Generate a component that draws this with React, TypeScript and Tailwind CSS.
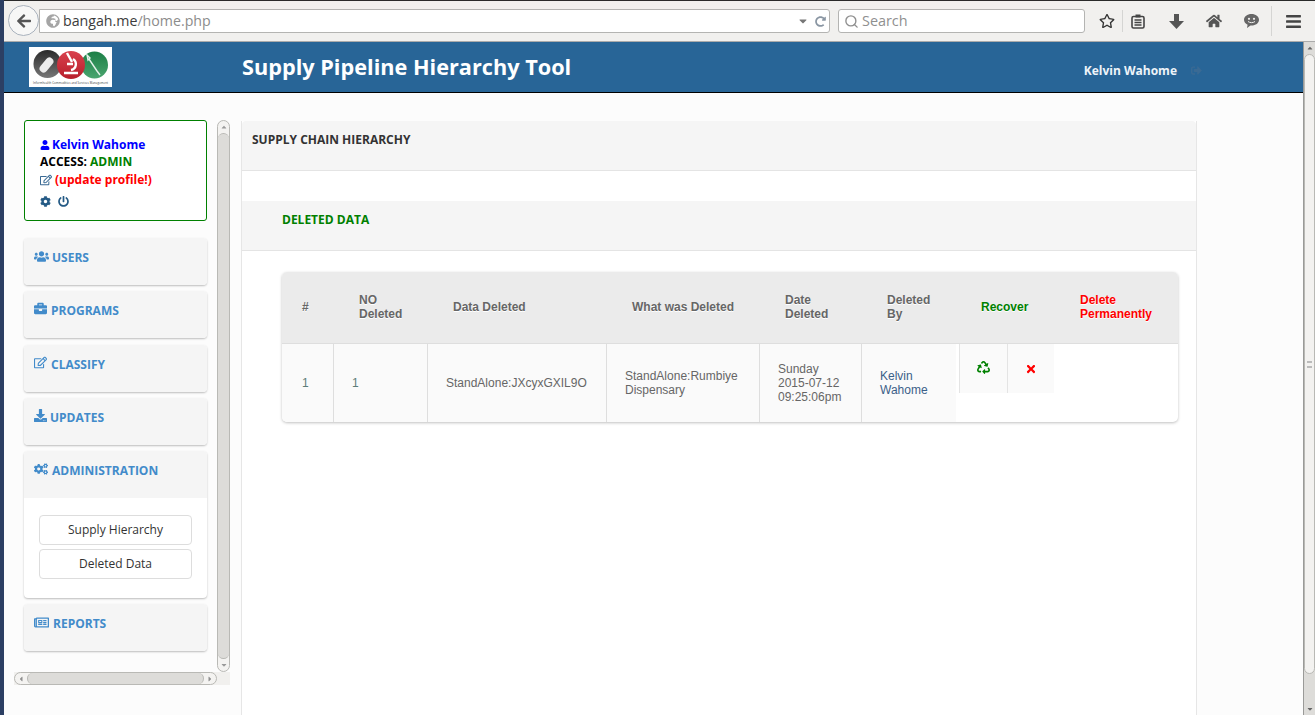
import type { ReactNode } from "react";
import { Search } from "lucide-react";
import {
  FaBriefcase,
  FaCog,
  FaCogs,
  FaDownload,
  FaHome,
  FaPowerOff,
  FaRecycle,
  FaRegEdit,
  FaRegNewspaper,
  FaSignOutAlt,
  FaTimes,
  FaUser,
  FaUsers,
  FaArrowLeft,
  FaGlobeAfrica,
  FaRedoAlt,
  FaRegStar,
  FaBars,
  FaCaretDown,
  FaCaretLeft,
  FaCaretRight,
  FaCaretUp,
} from "react-icons/fa";

function Logo() {
  return (
    <div className="h-[40px] w-[83px] bg-white">
      <svg width="83" height="40" viewBox="0 0 83 40">
        <defs>
          <linearGradient id="grey" x1="0" y1="0" x2="0" y2="1">
            <stop offset="0" stopColor="#2a2a2a" />
            <stop offset="1" stopColor="#777" />
          </linearGradient>
          <linearGradient id="red" x1="0" y1="0" x2="0" y2="1">
            <stop offset="0" stopColor="#d9414d" />
            <stop offset="1" stopColor="#b81f2c" />
          </linearGradient>
          <linearGradient id="green" x1="0" y1="0" x2="0" y2="1">
            <stop offset="0" stopColor="#1c7f46" />
            <stop offset="1" stopColor="#4aa56f" />
          </linearGradient>
        </defs>
        <circle cx="18.5" cy="17" r="14" fill="url(#grey)" />
        <circle cx="65.5" cy="18" r="13.5" fill="url(#green)" />
        <circle cx="42" cy="18" r="14" fill="url(#red)" />
        <rect x="9" y="14" width="17" height="8" rx="4" fill="#ececec" transform="rotate(-50 17.5 18)" />
        <path d="M38 6l5 9M44 12a6 6 0 0 1-2 11M35 26h14M38 17h6" stroke="#fff" strokeWidth="2.4" fill="none" />
        <path d="M58 8l3 3-2 2zM60 12l8 12 3 4" stroke="#e3f1e9" strokeWidth="1.4" fill="none" />
        <text x="4" y="36.5" textLength="75" fontSize="2.8" fill="#333">
          Informhealth Commodities and Services Management
        </text>
      </svg>
    </div>
  );
}

function ClipboardIcon() {
  return (
    <svg width="14" height="15" viewBox="0 0 14 15" fill="none">
      <rect x="1" y="2.5" width="12" height="11.5" rx="1.5" stroke="#444" strokeWidth="1.6" />
      <rect x="4.5" y="0.5" width="5" height="3" fill="#444" />
      <path d="M3.5 6h7M3.5 8.5h7M3.5 11h7" stroke="#444" strokeWidth="1.3" />
    </svg>
  );
}

function DownArrowIcon() {
  return (
    <svg width="15" height="15" viewBox="0 0 15 15">
      <path d="M5 0h5v7h5l-7.500 8L0 7h5z" fill="#555" />
    </svg>
  );
}

function ChatIcon() {
  return (
    <svg width="15" height="14" viewBox="0 0 15 14">
      <path d="M7.500 0C11.700 0 15 2.500 15 5.800s-3.300 5.800-7.500 5.800l-1 0L3 14l.6-3.200C1.400 9.800 0 8 0 5.800 0 2.500 3.300 0 7.500 0z" fill="#666" />
      <circle cx="5" cy="4.800" r="1.100" fill="#f1f0ee" />
      <circle cx="10" cy="4.800" r="1.100" fill="#f1f0ee" />
      <path d="M4 7.500c2 1.500 5 1.500 7 0" stroke="#f1f0ee" strokeWidth="1" fill="none" />
    </svg>
  );
}

function BrowserBar() {
  return (
    <div className="relative flex h-[42px] shrink-0 items-center border-t border-b border-t-[#2a2a2a] border-b-[#ababab] bg-[#f1f0ee] pl-[35px] pr-[4px]">
      <button className="absolute left-[4px] top-[4px] z-10 flex h-[31px] w-[31px] items-center justify-center rounded-full border border-[#a9b2bd] bg-[#f7f7f6] text-[16px] text-[#555]">
        <FaArrowLeft />
      </button>
      <div className="flex h-[24px] w-[791px] items-center rounded-r-[3px] border border-[#b4b4b2] bg-white pl-[6px] pr-[3px] text-[14.2px]">
        <FaGlobeAfrica className="text-[14px] text-[#a5a5a5]" />
        <span className="ml-[3px] text-[#3c3c3c]">bangah.me</span>
        <span className="text-[#8c8c8c]">/home.php</span>
        <FaCaretDown className="ml-auto text-[12px] text-[#777]" />
        <FaRedoAlt className="ml-[6px] text-[11px] text-[#8a96a3]" />
      </div>
      <div className="ml-[8px] flex h-[24px] w-[247px] items-center rounded-[3px] border border-[#b4b4b2] bg-white pl-[5px] text-[14.4px] text-[#8f8f8f]">
        <Search size={15} strokeWidth={2.2} className="mr-[3px]" />
        Search
      </div>
      <div className="ml-[14px] flex items-center text-[#4d4d4d]">
        <FaRegStar className="text-[16px] text-[#333]" />
        <div className="ml-[7px] mr-[8px] h-[22px] w-px bg-[#d5d5d3]" />
        <ClipboardIcon />
        <div className="ml-[24px]">
          <DownArrowIcon />
        </div>
        <FaHome className="ml-[22px] text-[16px] text-[#555]" />
        <div className="ml-[22px]">
          <ChatIcon />
        </div>
        <div className="ml-[12px] mr-[13px] h-[30px] w-px bg-[#d5d5d3]" />
        <FaBars className="text-[17px] text-[#444]" />
      </div>
    </div>
  );
}

function PageHeader() {
  return (
    <header className="flex h-[51px] shrink-0 items-center border-b border-black bg-[#286597] pl-[25px] pr-[101px] text-white">
      <div className="mb-[1px]">
        <Logo />
      </div>
      <h1 className="ml-[130px] text-[21.7px] leading-[30px] font-bold">
        Supply Pipeline Hierarchy Tool
      </h1>
      <div className="ml-auto mt-[7px] flex items-center text-[12px] font-bold text-[#eef4f9]">
        Kelvin Wahome
        <FaSignOutAlt className="ml-[14px] text-[11px] text-[#3a6a94]" />
      </div>
    </header>
  );
}

function ProfileBox() {
  return (
    <div className="h-[101px] rounded-[3px] border border-[#008000] bg-white px-[15px] pt-[15px] text-[12px] leading-[17.5px] font-bold">
      <div className="flex items-center text-[#0000ff]">
        <FaUser className="mr-[2px] text-[10px]" />
        Kelvin Wahome
      </div>
      <div className="-mt-[1px] mb-[1px] text-black">
        ACCESS: <span className="text-[#008000]">ADMIN</span>
      </div>
      <div className="flex items-center text-[#ff0000]">
        <FaRegEdit className="mr-[3px] text-[12px] text-[#3a6a94]" />
        (update profile!)
      </div>
      <div className="mt-[7px] flex items-center gap-[7px] text-[11px] text-[#245a85]">
        <FaCog />
        <FaPowerOff />
      </div>
    </div>
  );
}

function NavPanel({ icon, label, gap, className, children }: { icon: ReactNode; label: string; gap: string; className?: string; children?: ReactNode }) {
  return (
    <div className={`overflow-hidden rounded-[4px] bg-white shadow-[0_1px_2px_rgba(0,0,0,0.25)] ${className ?? ""}`}>
      <div className="flex h-[47px] items-start bg-[#f5f5f5] pl-[10px] pt-[11px] text-[12px] leading-[17px] font-bold text-[#428bca]">
        <span className={gap}>{icon}</span>
        {label}
      </div>
      {children}
    </div>
  );
}

function Sidebar() {
  return (
    <aside className="mt-[27px] w-[226px] shrink-0 pl-[10px]">
      <div className="flex h-[552px]">
        <div className="flex w-[203px] flex-col overflow-hidden px-[10px]">
          <ProfileBox />
          <div className="mt-[17px] flex flex-col gap-[6px]">
            <NavPanel icon={<FaUsers className="text-[15px]" />} label="USERS" gap="mr-[3px]" />
            <NavPanel icon={<FaBriefcase className="text-[13px]" />} label="PROGRAMS" gap="mr-[4px]" />
            <NavPanel icon={<FaRegEdit className="text-[13px]" />} label="CLASSIFY" gap="mr-[4px]" className="mt-[1px]" />
            <NavPanel icon={<FaDownload className="text-[13px]" />} label="UPDATES" gap="mr-[3px]" />
            <NavPanel icon={<FaCogs className="text-[14px]" />} label="ADMINISTRATION" gap="mr-[4px]">
              <div className="flex flex-col gap-[4px] px-[15px] pt-[17px] pb-[19px] text-[12px] text-[#333]">
                <button className="h-[30px] rounded-[4px] border border-[#dddddd] bg-white">Supply Hierarchy</button>
                <button className="h-[30px] rounded-[4px] border border-[#dddddd] bg-white">Deleted Data</button>
              </div>
            </NavPanel>
            <NavPanel icon={<FaRegNewspaper className="text-[15px]" />} label="REPORTS" gap="mr-[4px]" />
          </div>
        </div>
        <div className="flex w-[13px] flex-col items-center overflow-hidden rounded-full border border-[#b9b9b5] bg-[#f4f3f1] text-[8px] text-[#9a9a9a]">
          <FaCaretUp className="my-[2px] shrink-0" />
          <div className="w-full flex-1 rounded-full border-y border-[#b9b9b5] bg-[#dddcd9]" />
          <FaCaretDown className="my-[2px] shrink-0" />
        </div>
      </div>
      <div className="flex h-[13px] w-[216px] bg-[#f1f0ee]">
        <div className="flex h-full w-[203px] items-center overflow-hidden rounded-full border border-[#b9b9b5] bg-[#f4f3f1] text-[8px] text-[#8f8f8f]">
          <FaCaretLeft className="mx-[2px] shrink-0" />
          <div className="h-full flex-1 rounded-full border-x border-[#b9b9b5] bg-[#dddcd9]" />
          <FaCaretRight className="mx-[2px] shrink-0" />
        </div>
      </div>
    </aside>
  );
}

const headers = [
  { label: "#", width: "w-[57px]", color: "text-[#666]" },
  { label: "NO\nDeleted", width: "w-[94px]", color: "text-[#666]" },
  { label: "Data Deleted", width: "w-[179px]", color: "text-[#666]" },
  { label: "What was Deleted", width: "w-[153px]", color: "text-[#666]" },
  { label: "Date\nDeleted", width: "w-[102px]", color: "text-[#666]" },
  { label: "Deleted\nBy", width: "w-[94px]", color: "text-[#666]" },
  { label: "Recover", width: "w-[99px]", color: "text-[#008000]" },
  { label: "Delete\nPermanently", width: "w-[98px]", color: "text-[#ff0000]" },
];

function DeletedTable() {
  return (
    <div className="ml-[40px] mr-[18px] mt-[21px] overflow-hidden rounded-[5px] bg-white font-['Liberation_Sans',sans-serif] text-[12px] leading-[14px] shadow-[0_1px_3px_rgba(0,0,0,0.25)]">
      <div className="flex h-[72px] items-center border-b border-[#dedede] bg-[#ebebeb] pb-[2px] pl-[20px] font-bold [text-shadow:0_1px_0_#fff]">
        {headers.map((h) => (
          <div key={h.label} className={`${h.width} ${h.color} shrink-0 whitespace-pre-line`}>
            {h.label}
          </div>
        ))}
      </div>
      <div className="flex h-[78px] items-start text-[#666]">
        <div className="flex h-full w-[52px] items-center border-r border-[#dedede] bg-[#fafafa] pl-[20px] text-[#5c7d78]">1</div>
        <div className="flex h-full w-[94px] items-center border-r border-[#dedede] bg-[#fafafa] pl-[18px] text-[#5c7d78]">1</div>
        <div className="flex h-full w-[179px] items-center border-r border-[#dedede] bg-[#fafafa] pl-[18px]">StandAlone:JXcyxGXIL9O</div>
        <div className="h-full w-[153px] border-r border-[#dedede] bg-[#fafafa] pl-[18px] pt-[25px]">
          StandAlone:Rumbiye
          <br />
          Dispensary
        </div>
        <div className="h-full w-[102px] border-r border-[#dedede] bg-[#fafafa] pl-[18px] pt-[18px]">
          Sunday
          <br />
          2015-07-12
          <br />
          09:25:06pm
        </div>
        <div className="h-full w-[94px] bg-[#fafafa] pl-[18px] pt-[25px] text-[#3a6088]">
          Kelvin
          <br />
          Wahome
        </div>
        <div className="ml-[3px] flex h-[49px] w-[49px] items-center justify-center border-x border-[#e4e4e4] bg-[#fafafa] pb-[3px] text-[13px] text-[#008000]">
          <FaRecycle />
        </div>
        <div className="flex h-[49px] w-[46px] items-center justify-center bg-[#fafafa] text-[12px] text-[#ff0000]">
          <FaTimes />
        </div>
      </div>
    </div>
  );
}

function Band({ children, indent }: { children: ReactNode; indent: string }) {
  return (
    <div className={`h-[50px] border-b border-[#e4e4e4] bg-[#f5f5f5] pt-[10px] text-[12px] leading-[17px] font-bold ${indent}`}>
      {children}
    </div>
  );
}

export default function App() {
  return (
    <div className="flex h-[715px] w-[1315px] overflow-hidden bg-[#fcfcfc] font-['Open_Sans',sans-serif]">
      <div className="w-[4px] shrink-0 bg-[#2c3f63]" />
      <div className="flex min-w-0 flex-1 flex-col">
        <BrowserBar />
        <div className="flex min-h-0 flex-1">
          <div className="flex min-w-0 flex-1 flex-col">
            <PageHeader />
            <div className="flex min-h-0 flex-1">
              <Sidebar />
              <main className="ml-[11px] mb-[-20px] mt-[28px] w-[956px] shrink-0 border-x border-[#e6e6e6] bg-white">
                <div className="overflow-hidden rounded-t-[4px]">
                  <Band indent="pl-[10px] text-[#333]">SUPPLY CHAIN HIERARCHY</Band>
                </div>
                <div className="mt-[30px]">
                  <Band indent="pl-[40px] text-[#008000]">DELETED DATA</Band>
                </div>
                <DeletedTable />
              </main>
            </div>
          </div>
          <div className="flex w-[12px] shrink-0 flex-col items-center border-l border-[#9a9a98] bg-[#dddcd9] text-[8px] text-[#666]">
            <FaCaretUp className="my-[2px] shrink-0" />
            <div className="flex h-[620px] w-full flex-col items-center justify-center rounded-full border border-[#b9b9b5] bg-[#f3f2f0]">
              <div className="h-[7px] w-[5px] border-y-2 border-[#bbb]" />
            </div>
            <div className="flex-1" />
            <FaCaretDown className="my-[2px] shrink-0" />
          </div>
        </div>
      </div>
    </div>
  );
}
